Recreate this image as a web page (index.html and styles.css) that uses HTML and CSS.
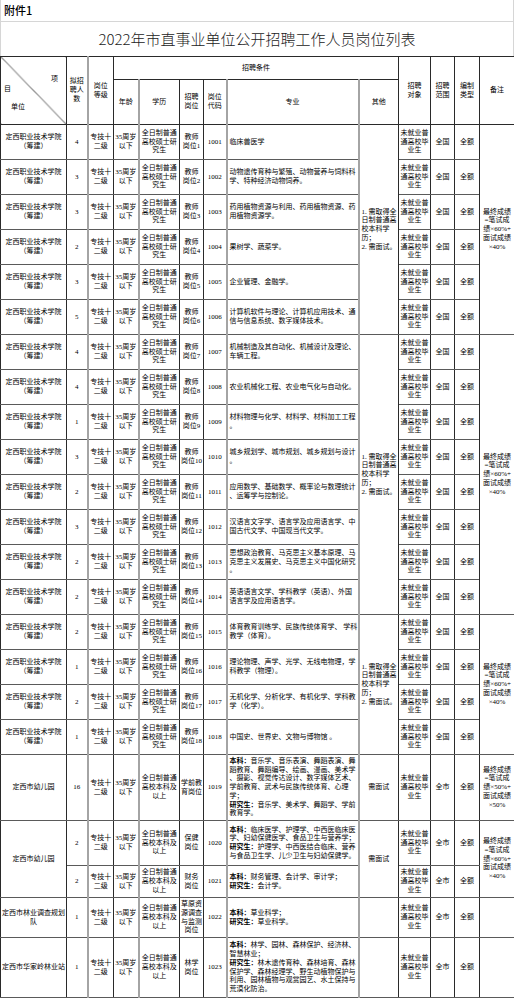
FILE: index.html
```html
<!DOCTYPE html>
<html lang="zh-CN">
<head>
<meta charset="utf-8">
<title>2022年市直事业单位公开招聘工作人员岗位列表</title>
<link rel="stylesheet" href="styles.css">
</head>
<body>
<div class="attach">附件1</div>
<div class="title">2022年市直事业单位公开招聘工作人员岗位列表</div>
<table class="grid">
<colgroup>
<col class="c-unit"><col class="c-num"><col class="c-lvl g2"><col class="c-age g1"><col class="c-edu g2"><col class="c-post g1"><col class="c-code"><col class="c-major g2"><col class="c-other g2"><col class="c-obj"><col class="c-range"><col class="c-type"><col class="c-note">
</colgroup>
<thead>
<tr class="h1">
<th rowspan="2" class="diag"><span class="d-xiang">项</span><span class="d-mu">目</span><span class="d-unit">单位</span></th>
<th rowspan="2">拟招<br>聘人<br>数</th>
<th rowspan="2">岗位<br>等级</th>
<th colspan="6">招聘条件</th>
<th rowspan="2">招聘<br>对象</th>
<th rowspan="2">招聘<br>范围</th>
<th rowspan="2">编制<br>类型</th>
<th rowspan="2">备注</th>
</tr>
<tr class="h2">
<th>年龄</th><th>学历</th><th>招聘<br>岗位</th><th>岗位<br>代码</th><th>专业</th><th>其他</th>
</tr>
</thead>
<tbody>
<tr class="r">
<td>定西职业技术学院<br>（筹建）</td><td>4</td><td>专技十<br>二级</td><td>35周岁<br>以下</td><td>全日制普通<br>高校硕士研<br>究生</td><td>教师<br>岗位1</td><td>1001</td><td class="maj">临床兽医学</td>
<td rowspan="6" class="oth">1. 需取得全<br>日制普通高<br>校本科学<br>历；<br>2. 需面试。</td>
<td>未就业普<br>通高校毕<br>业生</td><td>全国</td><td>全额</td>
<td rowspan="6">最终成绩<br>=笔试成<br>绩×60%+<br>面试成绩<br>×40%</td>
</tr>
<tr class="r">
<td>定西职业技术学院<br>（筹建）</td><td>3</td><td>专技十<br>二级</td><td>35周岁<br>以下</td><td>全日制普通<br>高校硕士研<br>究生</td><td>教师<br>岗位2</td><td>1002</td><td class="maj">动物遗传育种与繁殖、动物营养与饲料科<br>学、特种经济动物饲养。</td>
<td>未就业普<br>通高校毕<br>业生</td><td>全国</td><td>全额</td>
</tr>
<tr class="r">
<td>定西职业技术学院<br>（筹建）</td><td>3</td><td>专技十<br>二级</td><td>35周岁<br>以下</td><td>全日制普通<br>高校硕士研<br>究生</td><td>教师<br>岗位3</td><td>1003</td><td class="maj">药用植物资源与利用、药用植物资源、药<br>用植物资源学。</td>
<td>未就业普<br>通高校毕<br>业生</td><td>全国</td><td>全额</td>
</tr>
<tr class="r">
<td>定西职业技术学院<br>（筹建）</td><td>2</td><td>专技十<br>二级</td><td>35周岁<br>以下</td><td>全日制普通<br>高校硕士研<br>究生</td><td>教师<br>岗位4</td><td>1004</td><td class="maj">果树学、蔬菜学。</td>
<td>未就业普<br>通高校毕<br>业生</td><td>全国</td><td>全额</td>
</tr>
<tr class="r">
<td>定西职业技术学院<br>（筹建）</td><td>3</td><td>专技十<br>二级</td><td>35周岁<br>以下</td><td>全日制普通<br>高校硕士研<br>究生</td><td>教师<br>岗位5</td><td>1005</td><td class="maj">企业管理、金融学。</td>
<td>未就业普<br>通高校毕<br>业生</td><td>全国</td><td>全额</td>
</tr>
<tr class="r">
<td>定西职业技术学院<br>（筹建）</td><td>5</td><td>专技十<br>二级</td><td>35周岁<br>以下</td><td>全日制普通<br>高校硕士研<br>究生</td><td>教师<br>岗位6</td><td>1006</td><td class="maj">计算机软件与理论、计算机应用技术、通<br>信与信息系统、数字媒体技术。</td>
<td>未就业普<br>通高校毕<br>业生</td><td>全国</td><td>全额</td>
</tr>
<tr class="r">
<td>定西职业技术学院<br>（筹建）</td><td>4</td><td>专技十<br>二级</td><td>35周岁<br>以下</td><td>全日制普通<br>高校硕士研<br>究生</td><td>教师<br>岗位7</td><td>1007</td><td class="maj">机械制造及其自动化、机械设计及理论、<br>车辆工程。</td>
<td rowspan="8" class="oth">1. 需取得全<br>日制普通高<br>校本科学<br>历；<br>2. 需面试。</td>
<td>未就业普<br>通高校毕<br>业生</td><td>全国</td><td>全额</td>
<td rowspan="8">最终成绩<br>=笔试成<br>绩×60%+<br>面试成绩<br>×40%</td>
</tr>
<tr class="r">
<td>定西职业技术学院<br>（筹建）</td><td>4</td><td>专技十<br>二级</td><td>35周岁<br>以下</td><td>全日制普通<br>高校硕士研<br>究生</td><td>教师<br>岗位8</td><td>1008</td><td class="maj">农业机械化工程、农业电气化与自动化。</td>
<td>未就业普<br>通高校毕<br>业生</td><td>全国</td><td>全额</td>
</tr>
<tr class="r">
<td>定西职业技术学院<br>（筹建）</td><td>1</td><td>专技十<br>二级</td><td>35周岁<br>以下</td><td>全日制普通<br>高校硕士研<br>究生</td><td>教师<br>岗位9</td><td>1009</td><td class="maj">材料物理与化学、材料学、材料加工工程<br>。</td>
<td>未就业普<br>通高校毕<br>业生</td><td>全国</td><td>全额</td>
</tr>
<tr class="r">
<td>定西职业技术学院<br>（筹建）</td><td>3</td><td>专技十<br>二级</td><td>35周岁<br>以下</td><td>全日制普通<br>高校硕士研<br>究生</td><td>教师<br>岗位10</td><td>1010</td><td class="maj">城乡规划学、城市规划、城乡规划与设计<br>。</td>
<td>未就业普<br>通高校毕<br>业生</td><td>全国</td><td>全额</td>
</tr>
<tr class="r">
<td>定西职业技术学院<br>（筹建）</td><td>2</td><td>专技十<br>二级</td><td>35周岁<br>以下</td><td>全日制普通<br>高校硕士研<br>究生</td><td>教师<br>岗位11</td><td>1011</td><td class="maj">应用数学、基础数学、概率论与数理统计<br>、运筹学与控制论。</td>
<td>未就业普<br>通高校毕<br>业生</td><td>全国</td><td>全额</td>
</tr>
<tr class="r">
<td>定西职业技术学院<br>（筹建）</td><td>3</td><td>专技十<br>二级</td><td>35周岁<br>以下</td><td>全日制普通<br>高校硕士研<br>究生</td><td>教师<br>岗位12</td><td>1012</td><td class="maj">汉语言文字学、语言学及应用语言学、中<br>国古代文学、中国现当代文学。</td>
<td>未就业普<br>通高校毕<br>业生</td><td>全国</td><td>全额</td>
</tr>
<tr class="r">
<td>定西职业技术学院<br>（筹建）</td><td>2</td><td>专技十<br>二级</td><td>35周岁<br>以下</td><td>全日制普通<br>高校硕士研<br>究生</td><td>教师<br>岗位13</td><td>1013</td><td class="maj">思想政治教育、马克思主义基本原理、马<br>克思主义发展史、马克思主义中国化研究<br>。</td>
<td>未就业普<br>通高校毕<br>业生</td><td>全国</td><td>全额</td>
</tr>
<tr class="r">
<td>定西职业技术学院<br>（筹建）</td><td>2</td><td>专技十<br>二级</td><td>35周岁<br>以下</td><td>全日制普通<br>高校硕士研<br>究生</td><td>教师<br>岗位14</td><td>1014</td><td class="maj">英语语言文学、学科教学（英语）、外国<br>语言学及应用语言学。</td>
<td>未就业普<br>通高校毕<br>业生</td><td>全国</td><td>全额</td>
</tr>
<tr class="r">
<td>定西职业技术学院<br>（筹建）</td><td>2</td><td>专技十<br>二级</td><td>35周岁<br>以下</td><td>全日制普通<br>高校硕士研<br>究生</td><td>教师<br>岗位15</td><td>1015</td><td class="maj">体育教育训练学、民族传统体育学、 学科<br>教学（体育）。</td>
<td rowspan="4" class="oth">1. 需取得全<br>日制普通高<br>校本科学<br>历；<br>2. 需面试。</td>
<td>未就业普<br>通高校毕<br>业生</td><td>全国</td><td>全额</td>
<td rowspan="4">最终成绩<br>=笔试成<br>绩×60%+<br>面试成绩<br>×40%</td>
</tr>
<tr class="r">
<td>定西职业技术学院<br>（筹建）</td><td>1</td><td>专技十<br>二级</td><td>35周岁<br>以下</td><td>全日制普通<br>高校硕士研<br>究生</td><td>教师<br>岗位16</td><td>1016</td><td class="maj">理论物理、声学、光学、无线电物理，学<br>科教学（物理）。</td>
<td>未就业普<br>通高校毕<br>业生</td><td>全国</td><td>全额</td>
</tr>
<tr class="r">
<td>定西职业技术学院<br>（筹建）</td><td>2</td><td>专技十<br>二级</td><td>35周岁<br>以下</td><td>全日制普通<br>高校硕士研<br>究生</td><td>教师<br>岗位17</td><td>1017</td><td class="maj">无机化学、分析化学、有机化学、学科教<br>学（化学）。</td>
<td>未就业普<br>通高校毕<br>业生</td><td>全国</td><td>全额</td>
</tr>
<tr class="r">
<td>定西职业技术学院<br>（筹建）</td><td>1</td><td>专技十<br>二级</td><td>35周岁<br>以下</td><td>全日制普通<br>高校硕士研<br>究生</td><td>教师<br>岗位18</td><td>1018</td><td class="maj">中国史、世界史、文物与博物馆 。</td>
<td>未就业普<br>通高校毕<br>业生</td><td>全国</td><td>全额</td>
</tr>
<tr class="r19">
<td>定西市幼儿园</td><td>16</td><td>专技十<br>二级</td><td>35周岁<br>以下</td><td>全日制普通<br>高校本科及<br>以上</td><td>学前教<br>育岗位</td><td>1019</td>
<td class="maj"><b>本科：</b>音乐学、音乐表演、舞蹈表演、舞<br>蹈教育、舞蹈编导、绘画、漫画、美术学<br>、摄影、视觉传达设计、数字媒体艺术、<br>学前教育、武术与民族传统体育、心理<br>学；<br><b>研究生：</b>音乐学、美术学、舞蹈学、学前<br>教育学。</td>
<td>需面试</td>
<td>未就业普<br>通高校毕<br>业生</td><td>全市</td><td>全额</td>
<td>最终成绩<br>=笔试成<br>绩×50%+<br>面试成绩<br>×50%</td>
</tr>
<tr class="r20">
<td rowspan="2">定西市幼儿园</td><td>2</td><td>专技十<br>二级</td><td>35周岁<br>以下</td><td>全日制普通<br>高校本科及<br>以上</td><td>保健<br>岗位</td><td>1020</td>
<td class="maj"><b>本科：</b>临床医学、护理学、中西医临床医<br>学、妇幼保健医学、食品卫生与营养学；<br><b>研究生：</b>护理学、中西医结合临床、营养<br>与食品卫生学、儿少卫生与妇幼保健学。</td>
<td rowspan="2">需面试</td>
<td>未就业普<br>通高校毕<br>业生</td><td>全市</td><td>全额</td>
<td rowspan="2">最终成绩<br>=笔试成<br>绩×60%+<br>面试成绩<br>×40%</td>
</tr>
<tr class="r21">
<td>2</td><td>专技十<br>二级</td><td>35周岁<br>以下</td><td>全日制普通<br>高校本科及<br>以上</td><td>财务<br>岗位</td><td>1021</td>
<td class="maj"><b>本科：</b>财务管理、会计学、审计学；<br><b>研究生：</b>会计学。</td>
<td>未就业普<br>通高校毕<br>业生</td><td>全市</td><td>全额</td>
</tr>
<tr class="r22">
<td>定西市林业调查规划<br>队</td><td>1</td><td>专技十<br>二级</td><td>35周岁<br>以下</td><td>全日制普通<br>高校本科及<br>以上</td><td>草原资<br>源调查<br>与监测<br>岗位</td><td>1022</td>
<td class="maj"><b>本科：</b>草业科学；<br><b>研究生：</b>草业科学。</td>
<td></td>
<td>未就业普<br>通高校毕<br>业生</td><td>全市</td><td>全额</td>
<td></td>
</tr>
<tr class="r23">
<td>定西市华家岭林业站</td><td>1</td><td>专技十<br>二级</td><td>35周岁<br>以下</td><td>全日制普通<br>高校本科及<br>以上</td><td>林学<br>岗位</td><td>1023</td>
<td class="maj"><b>本科：</b>林学、园林、森林保护、经济林、<br>智慧林业；<br><b>研究生：</b>林木遗传育种、森林培育、森林<br>保护学、森林经理学、野生动植物保护与<br>利用、园林植物与观赏园艺、水土保持与<br>荒漠化防治。</td>
<td></td>
<td>未就业普<br>通高校毕<br>业生</td><td>全市</td><td>全额</td>
<td></td>
</tr>
</tbody>
</table>
</body>
</html>
```
FILE: styles.css
```css
* { box-sizing: border-box; }

html, body {
  margin: 0;
  padding: 0;
  background: #ffffff;
}

body {
  width: 514px;
  color: #000;
  font-family: "Liberation Serif", "Noto Sans CJK SC", serif;
}

.attach {
  height: 22px;
  padding-left: 3px;
  border-left: 1px solid #d6d6d6;
  border-right: 1px solid #d6d6d6;
  border-bottom: 1px solid #d6d6d6;
  font-family: "Noto Sans CJK SC", sans-serif;
  font-weight: 500;
  font-size: 11px;
  line-height: 21px;
}

.title {
  height: 34px;
  border-left: 1px solid #d6d6d6;
  border-right: 1px solid #d6d6d6;
  text-align: center;
  font-family: "Noto Sans CJK SC", sans-serif;
  font-weight: 300;
  font-size: 15px;
  line-height: 34px;
  color: #222;
}

.grid {
  width: 514px;
  table-layout: fixed;
  border-collapse: collapse;
  font-size: 7px;
  line-height: 8.7px;
}

.c-unit { width: 66px; }
.c-num { width: 21px; }
.c-lvl { width: 26px; }
.c-age { width: 25px; }
.c-edu { width: 41px; }
.c-post { width: 24px; }
.c-code { width: 23px; }
.c-major { width: 132px; }
.c-other { width: 40px; }
.c-obj { width: 32px; }
.c-range { width: 24px; }
.c-type { width: 25px; }
.c-note { width: 35px; }

.g2 { border-left: 2px solid #a4a4a4; }
.g1 { border-left: 1px solid #8a8a8a; }

.grid th,
.grid td {
  border: 1px solid #2a2a2a;
  padding: 0 1px;
  text-align: center;
  vertical-align: middle;
  white-space: nowrap;
  overflow: hidden;
  font-weight: normal;
}

.grid tbody td {
  border-top-color: #5a5a5a;
  border-bottom-color: #5a5a5a;
}

.h1 { height: 23px; }
.h2 { height: 45px; }
.r { height: 35px; }
.r19 { height: 66px; }
.r20 { height: 45px; }
.r21 { height: 32px; }
.r22 { height: 40px; }
.r23 { height: 60px; }

.grid th.diag {
  vertical-align: top;
  text-align: left;
  padding: 0;
  background: linear-gradient(to top right, transparent calc(50% - 0.6px), #333 50%, transparent calc(50% + 0.6px));
}

.d-xiang {
  display: block;
  text-align: right;
  padding-right: 8px;
  margin-top: 18px;
}

.d-mu {
  display: block;
  padding-left: 3px;
  margin-top: 1px;
}

.d-unit {
  display: block;
  padding-left: 10px;
  margin-top: 10px;
}

.grid td.maj {
  text-align: left;
  padding-left: 2px;
}

.grid td.oth {
  text-align: left;
  padding-left: 2px;
}

.grid b {
  font-weight: 700;
}
```
